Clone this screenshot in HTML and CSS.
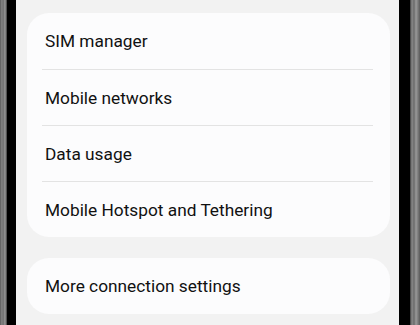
FILE: index.html
```html
<!DOCTYPE html>
<html>
<head>
<meta charset="utf-8">
<link rel="stylesheet" href="styles.css">
</head>
<body>
<div class="device">
  <div class="edge edge-left"></div>
  <div class="bezel"></div>
  <main class="screen">
    <section class="card">
      <div class="row">SIM manager</div>
      <div class="row">Mobile networks</div>
      <div class="row">Data usage</div>
      <div class="row">Mobile Hotspot and Tethering</div>
    </section>
    <section class="card">
      <div class="row">More connection settings</div>
    </section>
  </main>
  <div class="bezel bezel-right"></div>
  <div class="edge edge-right"></div>
</div>
</body>
</html>
```

FILE: styles.css
```css
html, body {
  margin: 0;
  padding: 0;
  width: 420px;
  height: 325px;
  overflow: hidden;
  background: #000;
}
.device {
  display: flex;
  height: 325px;
}
.edge {
  width: 7px;
  flex: none;
}
.edge-left {
  background: linear-gradient(to right, #5a5a5a 0, #8a8a8a 2px, #6a6a6a 3px, #9a9a9a 5px, #3a3a3a 7px);
}
.edge-right {
  width: 10px;
  background: linear-gradient(to right, #3a3a3a 0, #8a8a8a 2px, #6a6a6a 4px, #9a9a9a 6px, #7a7a7a 8px, #5a5a5a 10px);
}
.bezel {
  width: 9px;
  flex: none;
  background: #000;
}
.bezel-right {
  width: 11px;
}
.screen {
  flex: 1;
  background: #f2f2f2;
  padding: 13px 9px 0 11px;
  display: flex;
  flex-direction: column;
  gap: 21px;
}
.card {
  background: #fcfcfd;
  border-radius: 22px;
  padding: 0 17px 0 15px;
}
.row {
  height: 56px;
  display: flex;
  align-items: center;
  padding-left: 3px;
  font-family: Roboto, "Noto Sans", sans-serif;
  font-size: 17.3px;
  color: #111;
  border-top: 1px solid #e3e3e3;
  box-sizing: border-box;
}
.row:first-child {
  border-top: none;
}
```
